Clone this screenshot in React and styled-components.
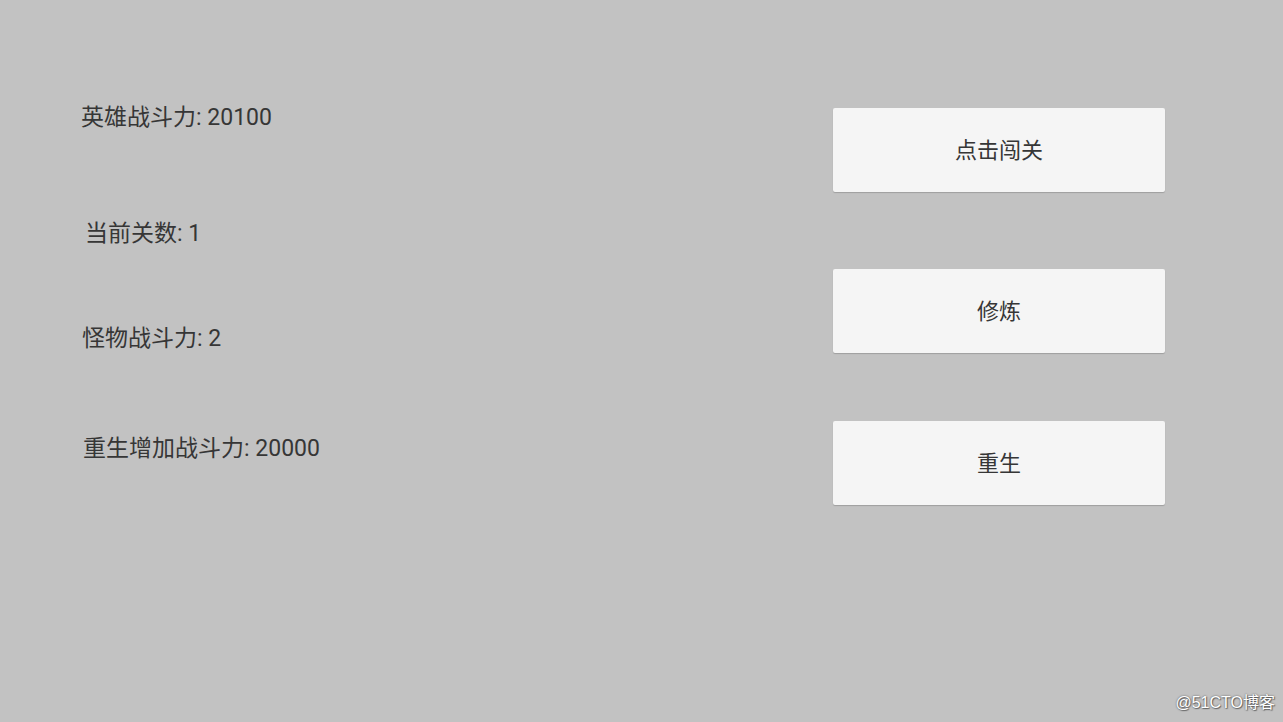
import React from "react";
import styled, {createGlobalStyle} from "styled-components";

const GlobalStyle = createGlobalStyle`
  html, body {
    margin: 0;
    padding: 0;
    background: #c2c2c2;
  }
  body {
    font-family: Roboto, "Noto Sans CJK SC", sans-serif;
  }
`

const stats = [
    {label: "英雄战斗力", value: 20100, top: 103, left: 81},
    {label: "当前关数", value: 1, top: 86, left: 85},
    {label: "怪物战斗力", value: 2, top: 75, left: 82},
    {label: "重生增加战斗力", value: 20000, top: 80, left: 83},
]

const actions = [
    {text: "点击闯关", top: 108},
    {text: "修炼", top: 77},
    {text: "重生", top: 68},
]

const App = () => {
    return (
        <>
            <GlobalStyle/>
            <StyledScreen>
                <StyledStats>
                    {stats.map((s) => (
                        <StyledStat key={s.label} top={s.top} left={s.left}>
                            {s.label}: {s.value}
                        </StyledStat>
                    ))}
                </StyledStats>
                <StyledActions>
                    {actions.map((a) => (
                        <StyledButton key={a.text} top={a.top}>{a.text}</StyledButton>
                    ))}
                </StyledActions>
                <StyledWatermark>@51CTO博客</StyledWatermark>
            </StyledScreen>
        </>
    )
}

export default App;

const StyledScreen = styled.div`
  position: relative;
  width: 1283px;
  height: 722px;
  display: flex;
  justify-content: space-between;
  background: #c2c2c2;
  overflow: hidden;
`

const StyledStats = styled.div`
  display: flex;
  flex-direction: column;
`

const StyledStat = styled.div`
  margin-top: ${(p) => p.top}px;
  margin-left: ${(p) => p.left}px;
  height: 30px;
  line-height: 30px;
  font-size: 23px;
  color: #363636;
  white-space: nowrap;
`

const StyledActions = styled.div`
  display: flex;
  flex-direction: column;
  margin-right: 118px;
`

const StyledButton = styled.button`
  margin-top: ${(p) => p.top}px;
  width: 332px;
  height: 84px;
  padding: 0 0 5px;
  border: none;
  border-radius: 2px;
  background: #f5f5f5;
  box-shadow: 0 1px 1px rgba(0, 0, 0, 0.18);
  font-family: Roboto, "Noto Sans CJK SC", sans-serif;
  font-size: 22px;
  color: #363636;
`

const StyledWatermark = styled.div`
  position: absolute;
  right: 8px;
  bottom: 9px;
  font-family: "Liberation Sans", "Noto Sans CJK SC", sans-serif;
  font-size: 16px;
  color: #ffffff;
  text-shadow: 0 0 2px rgba(0, 0, 0, 0.6), 1px 1px 1px rgba(0, 0, 0, 0.4);
`
